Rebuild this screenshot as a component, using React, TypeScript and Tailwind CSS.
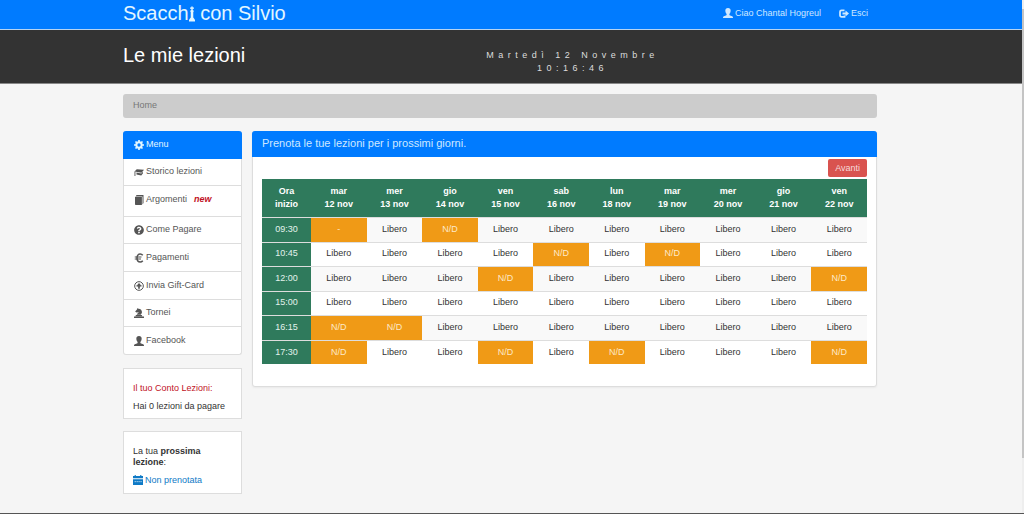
import React from "react";
import { FaQuestionCircle } from "react-icons/fa";

const days = ["mar 12", "mer 13", "gio 14", "ven 15", "sab 16", "lun 18", "mar 19", "mer 20", "gio 21", "ven 22"];

// busy: column index -> text of the slot, everything else is free
const rows: { time: string; busy: Record<number, string> }[] = [
  { time: "09:30", busy: { 0: "-", 2: "N/D" } },
  { time: "10:45", busy: { 4: "N/D", 6: "N/D" } },
  { time: "12:00", busy: { 3: "N/D", 9: "N/D" } },
  { time: "15:00", busy: {} },
  { time: "16:15", busy: { 0: "N/D", 1: "N/D" } },
  { time: "17:30", busy: { 0: "N/D", 3: "N/D", 5: "N/D", 9: "N/D" } },
];

const UserIcon = () => (
  <svg viewBox="0 0 18 18" fill="currentColor" className="size-[10px] shrink-0">
    <path d="M9 0C5.800 0 4.200 1.800 4.200 4.600c0 2.600.9 4.600 2.300 6v1.600c0 .6-.5.9-1.300 1.200L1.500 14.800C.6 15.200 0 16 0 17v1h18v-1c0-1-.6-1.800-1.500-2.200l-3.700-1.400c-.8-.3-1.300-.6-1.300-1.200v-1.600c1.400-1.400 2.300-3.400 2.300-6C13.800 1.800 12.200 0 9 0z" />
  </svg>
);

const ExitIcon = () => (
  <svg viewBox="0 0 20 18" className="h-[9px] w-[10px] shrink-0">
    <path d="M11 2.500H5A3 3 0 0 0 2 5.500v7a3 3 0 0 0 3 3h6v-2.500" fill="none" stroke="currentColor" strokeWidth="3.500" />
    <path d="M7 7h6V3l7 6-7 6v-4H7z" fill="currentColor" />
  </svg>
);

const CogIcon = () => (
  <svg viewBox="0 0 20 20" className="size-[10px] shrink-0">
    <circle cx="10" cy="10" r="5.300" fill="none" stroke="currentColor" strokeWidth="4" />
    <path d="M10 0v4M10 16v4M0 10h4M16 10h4M3 3l2.800 2.800M14.200 14.200L17 17M17 3l-2.800 2.800M5.800 14.200L3 17" stroke="currentColor" strokeWidth="3.400" />
  </svg>
);

const LessonsIcon = () => (
  <svg viewBox="0 0 20 18" fill="currentColor" className="h-[9px] w-[10px] shrink-0">
    <path d="M5.500 2.500L20 3.500l-5 6L1 7z" />
    <path d="M5 9l9.500 2L18 7.500v3L14.500 15 5 13zM1 7h1.800v9H1z" />
  </svg>
);

const BookIcon = () => (
  <svg viewBox="0 0 20 20" fill="currentColor" className="size-[10px] shrink-0">
    <path d="M5 0h14v16l-2 3V3H4.500L3 4.500V4z" />
    <path d="M2 4.200h13.800V20H3.500C2.500 20 2 19.300 2 18.500z" />
  </svg>
);

const EuroIcon = () => (
  <svg viewBox="0 0 20 20" fill="none" stroke="currentColor" className="size-[10px] shrink-0">
    <path d="M17.500 4.500C16 2.800 14.500 2 12.500 2 8.500 2 6 5.500 6 10s2.500 8 6.500 8c2 0 3.500-.8 5-2.500" strokeWidth="3.200" />
    <path d="M1.500 8H15M1.500 12h12.500" strokeWidth="2.200" />
  </svg>
);

const GiftIcon = () => (
  <svg viewBox="0 0 18 18" className="size-[10px] shrink-0">
    <circle cx="9" cy="9" r="7.800" fill="none" stroke="currentColor" strokeWidth="1.800" />
    <path d="M9 3.500l4 4.500h-2.500v6h-3V8H5z" fill="currentColor" />
    <path d="M4.500 7.500h9v2.500h-9z" fill="currentColor" />
  </svg>
);

const KnightIcon = () => (
  <svg viewBox="0 0 18 18" fill="currentColor" className="size-[10px] shrink-0">
    <path d="M6.500 0l1.500 1.500c4 .3 6.500 3 6.300 6 0 2-1.300 3-2.300 4.500H5c0-2 2.500-2.800 3.500-4.500L4.500 8 2 6.500 5 3zM3.500 12.500H14l1 2.500H2.500zM0 15.500h18V18H0z" />
  </svg>
);

const CalendarIcon = () => (
  <svg viewBox="0 0 18 18" fill="currentColor" className="size-[10px] shrink-0">
    <path d="M3 0h2v2h8V0h2v2h3v4H0V2h3zM0 7.500h18V18H0z" />
    <path d="M3 12h2M6.500 12h2M10 12h2M13.500 12h2" stroke="#fff" strokeWidth="1.500" />
  </svg>
);

const menu = [
  { label: "Storico lezioni", icon: <LessonsIcon />, size: "h-[26px]" },
  { label: "Argomenti", icon: <BookIcon />, size: "h-[30px] pb-[3px]", isNew: true },
  { label: "Come Pagare", icon: <FaQuestionCircle className="size-[10px]" />, size: "h-[26px]" },
  { label: "Pagamenti", icon: <EuroIcon />, size: "h-[27px]" },
  { label: "Invia Gift-Card", icon: <GiftIcon />, size: "h-[27px]" },
  { label: "Tornei", icon: <KnightIcon />, size: "h-[26px]" },
  { label: "Facebook", icon: <UserIcon />, size: "h-[27px]" },
];

const Header = () => (
  <header className="text-white">
    <nav className="flex h-[30px] items-start justify-between border-b border-[#b5d3f2] bg-[#007bff] pl-[123px] pr-[154px]">
      <a href="#" className="flex text-xl leading-[26px] text-[#e2f6ff]">
        Scacch
        <svg viewBox="0 0 12 30" fill="currentColor" className="mt-[6px] h-[16px] w-[6px]">
          <path d="M4.500 0h3v2H10v2.500H7.500V7L10 9 8.500 11v11l2 2.500L12 27v3H0v-3l1.500-2.500 2-2.500V11L2 9l2.500-2V4.500H2V2h2.500z" />
        </svg>
        <span className="whitespace-pre"> con Silvio</span>
      </a>
      <div className="flex gap-[18px] leading-[26px] text-[#cfe8ff]">
        <a href="#" className="flex items-center gap-[2px]"><UserIcon />Ciao Chantal Hogreul</a>
        <a href="#" className="flex items-center gap-[2px]"><ExitIcon />Esci</a>
      </div>
    </nav>
    <div className="grid h-[54px] grid-cols-3 border-b border-[#888] bg-[#333] pl-[123px]">
      <h1 className="pt-3 text-xl leading-[26px]">Le mie lezioni</h1>
      <div className="whitespace-nowrap pt-[19px] text-center leading-[13px] tracking-[0.5em] text-[#ddd]">
        <p>Martedì 12 Novembre</p>
        <p>10:16:46</p>
      </div>
    </div>
  </header>
);

const Sidebar = () => (
  <aside className="w-[119px] shrink-0">
    <ul className="rounded-[3px] border border-t-0 border-[#ddd] bg-white text-[#555]">
      <li className="-mx-px flex h-7 items-center gap-[2px] rounded-t-[3px] bg-[#007bff] pl-[11px] text-[#e2f6ff]">
        <CogIcon />Menu
      </li>
      {menu.map((item) => (
        <li key={item.label} className="border-b border-[#ddd] last:border-b-0">
          <a href="#" className={`flex items-center gap-[2px] pl-[10px] ${item.size}`}>
            {item.icon}
            {item.label}
            {item.isNew && <em className="ml-[5px] font-bold text-[#c1121f]">new</em>}
          </a>
        </li>
      ))}
    </ul>
    <section className="mt-[13px] border border-[#ddd] bg-white px-[9px] pb-[5px] pt-3 leading-[14px]">
      <p className="text-[#c1121f]">Il tuo Conto Lezioni:</p>
      <p className="mt-1">Hai 0 lezioni da pagare</p>
    </section>
    <section className="mt-3 border border-[#ddd] bg-white px-[9px] pb-[5px] pt-[14px] leading-[11px]">
      <p>La tua <b>prossima lezione</b>:</p>
      <a href="#" className="mt-1 flex items-center gap-[2px] leading-[16px] text-[#0f7ac6]">
        <CalendarIcon />Non prenotata
      </a>
    </section>
  </aside>
);

const Booking = () => (
  <main className="min-w-0 flex-1 rounded-[3px] border border-[#ddd] bg-white pb-[22px] shadow-xs">
    <h2 className="-mx-px -mt-px h-[26px] rounded-t-[3px] bg-[#007bff] pl-[10px] text-[11px] leading-[25px] text-[#cfe8ff]">
      Prenota le tue lezioni per i prossimi giorni.
    </h2>
    <div className="px-[9px] pt-[2px]">
      <div className="flex justify-end">
        <button className="h-[18px] rounded-[2px] bg-[#d9534f] px-[7px] pt-px text-[#f6dada]">Avanti</button>
      </div>
      <table className="mt-[2px] w-full table-fixed border-collapse text-center">
        <thead>
          <tr className="h-[38px] bg-[#2f7a5c] leading-[13px] text-white">
            <th className="w-[49px]">Ora<br />inizio</th>
            {days.map((day) => {
              const [name, num] = day.split(" ");
              return <th key={day}>{name}<br />{num} nov</th>;
            })}
          </tr>
        </thead>
        <tbody>
          {rows.map((row) => (
            <tr key={row.time} className="h-6 border-t border-[#ddd] odd:h-[25px] odd:bg-[#f9f9f9]">
              <th className="bg-[#2f7a5c] font-normal text-[#e3f3ec]">{row.time}</th>
              {days.map((day, i) =>
                row.busy[i] ? (
                  <td key={day} className="bg-[#f09a16] text-[#fde9c9]">{row.busy[i]}</td>
                ) : (
                  <td key={day}>Libero</td>
                )
              )}
            </tr>
          ))}
        </tbody>
      </table>
    </div>
  </main>
);

const App = () => {
  return (
    <div className="flex min-h-screen border-b border-[#555] bg-[#f5f5f5] font-['Liberation_Sans',Arial,sans-serif] text-[9px] text-[#333]">
      <div className="min-w-0 flex-1">
        <Header />
        <div className="pl-[123px] pr-[145px]">
          <div className="mt-[10px] h-6 rounded-[3px] bg-[#ccc] pl-[10px] leading-[23px] text-[#777]">Home</div>
          <div className="mt-[13px] flex items-start gap-[10px]">
            <Sidebar />
            <Booking />
          </div>
        </div>
      </div>
      <div className="w-[2px] bg-[#eee]">
        <div className="mt-[9px] h-[449px] bg-[#c4c4c4]" />
      </div>
    </div>
  );
};

export default App;
